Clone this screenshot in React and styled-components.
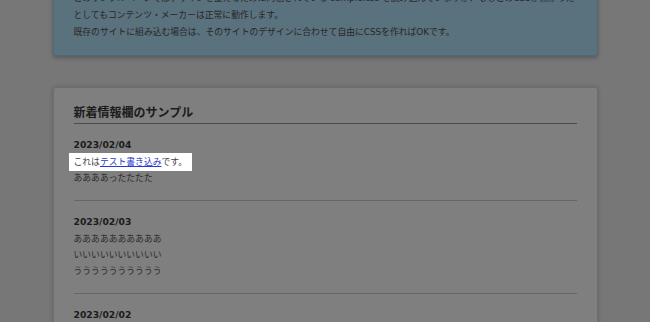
import React from 'react';
import styled, { createGlobalStyle } from 'styled-components';

const GlobalStyle = createGlobalStyle`
  body {
    margin: 0;
    background: #eee;
    font-family: "DejaVu Sans", "Noto Sans CJK JP", sans-serif;
    color: #333;
    overflow: hidden;
  }
`;

const Page = styled.main`
  width: 545px;
  margin: -26px auto 0;
`;

const Notice = styled.section`
  box-sizing: border-box;
  background: #b4e2fc;
  border: 1px solid #a6d0ee;
  border-radius: 3px;
  box-shadow: 0 2px 4px rgba(0, 0, 0, 0.25);
  padding: 15px 20px 14px;
  font-size: 8.8px;
  line-height: 17px;
  color: #505050;
`;

const Card = styled.section`
  box-sizing: border-box;
  margin-top: 31px;
  background: #fff;
  border: 1px solid #ddd;
  border-radius: 3px;
  box-shadow: 0 0 4px rgba(0, 0, 0, 0.2);
  padding: 15px 20px 40px;
`;

const Heading = styled.h2`
  margin: 0;
  padding-bottom: 3px;
  border-bottom: 1px solid #999;
  font-family: "Noto Sans CJK JP", sans-serif;
  font-size: 12px;
  font-weight: bold;
  line-height: 17px;
  color: #3a3a3a;
`;

const Item = styled.article`
  padding: 12px 0 14px;
  border-bottom: 1px solid #ccc;
`;

const Date = styled.h3`
  margin: 0;
  font-size: 9.2px;
  font-weight: bold;
  line-height: 18px;
  color: #3a3a3a;
`;

const Line = styled.p`
  margin: 0;
  font-size: 8.8px;
  line-height: 16px;
  color: #555;
`;

const Spot = styled.span`
  position: relative;
  z-index: 11;
  display: inline-block;
  background: #fff;
  padding: 1px 5px;
  margin: -1px -5px;
  color: #444;
`;

const Link = styled.a`
  color: #2a3acc;
  text-decoration: underline;
`;

const Overlay = styled.div`
  position: fixed;
  inset: 0;
  z-index: 10;
  background: rgba(0, 0, 0, 0.5);
`;

const NEWS = [
  { date: '2023/02/04', lines: ['ああああったたたた'], spot: true },
  { date: '2023/02/03', lines: ['ああああああああああ', 'いいいいいいいいいい', 'うううううううううう'] },
  { date: '2023/02/02', lines: ['おおおおおおおおおお'] },
];

export default function App() {
  return (
    <>
      <GlobalStyle />
      <Page>
        <Notice>
          このサンプルページではデザインを整えるために同梱されている sample.css を読み込んでいますが、もしこのCSSが無かったとしてもコンテンツ・メーカーは正常に動作します。<br />
          既存のサイトに組み込む場合は、そのサイトのデザインに合わせて自由にCSSを作ればOKです。
        </Notice>
        <Card>
          <Heading>新着情報欄のサンプル</Heading>
          {NEWS.map(item => (
            <Item key={item.date}>
              <Date>{item.date}</Date>
              {item.spot && (
                <Line>
                  <Spot>これは<Link href="#">テスト書き込み</Link>です。</Spot>
                </Line>
              )}
              {item.lines.map((text, i) => <Line key={i}>{text}</Line>)}
            </Item>
          ))}
        </Card>
      </Page>
      <Overlay />
    </>
  );
}
